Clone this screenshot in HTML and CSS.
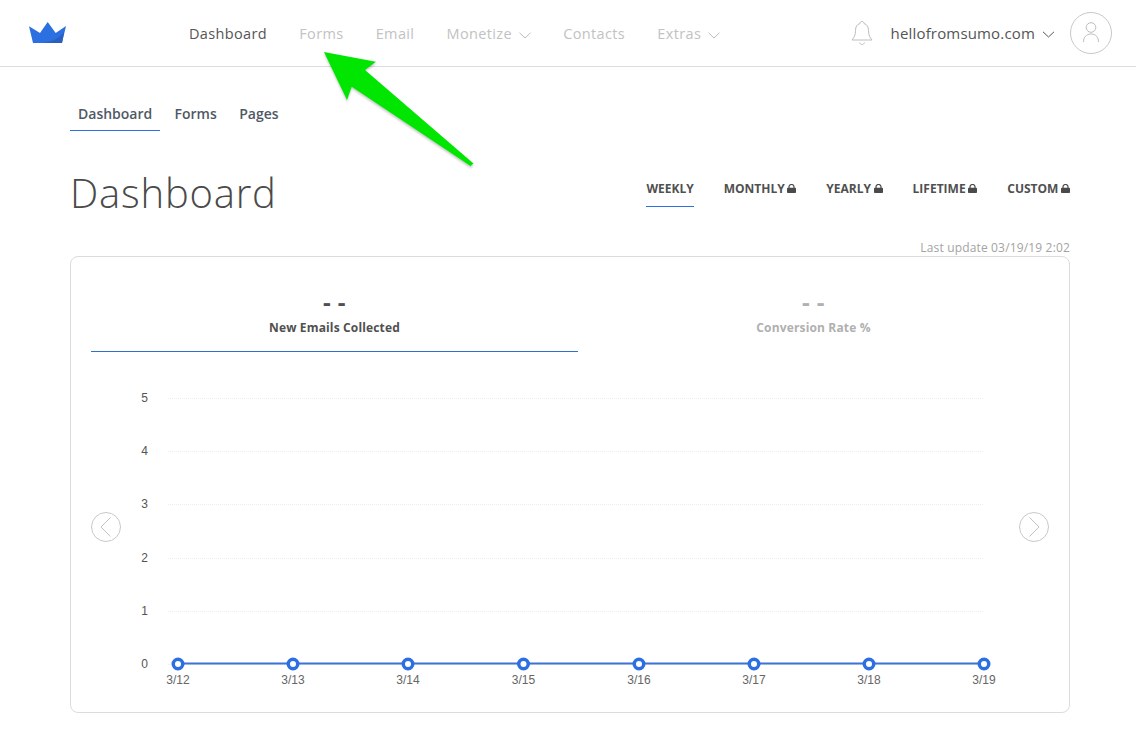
FILE: index.html
```html
<!DOCTYPE html>
<html lang="en">
<head>
<meta charset="utf-8">
<title>Dashboard</title>
<link rel="stylesheet" href="styles.css">
</head>
<body>
<header class="topbar">
  <a class="logo" href="#">
    <svg width="37" height="21" viewBox="0 0 37 21"><path d="M0 4.300 11 11 18.700 0 26.700 11 37 4 33 21H4Z" fill="#2b6fe0"/><path d="M33 21H14C22 20 30 17 35 10Z" fill="#2a5fbd"/></svg>
  </a>
  <nav class="mainnav">
    <a class="mainnav-item mainnav-item--active" href="#">Dashboard</a>
    <a class="mainnav-item" href="#">Forms</a>
    <a class="mainnav-item" href="#">Email</a>
    <a class="mainnav-item" href="#">Monetize <svg class="chev" width="12" height="7" viewBox="0 0 12 7"><path d="M.5.800 6 6l5.500-5.200" fill="none" stroke="#bbb"/></svg></a>
    <a class="mainnav-item" href="#">Contacts</a>
    <a class="mainnav-item" href="#">Extras <svg class="chev" width="12" height="7" viewBox="0 0 12 7"><path d="M.5.800 6 6l5.500-5.200" fill="none" stroke="#bbb"/></svg></a>
  </nav>
  <div class="account">
    <svg class="bell" width="22" height="26" viewBox="0 0 22 26"><path d="M11 1.500c-1.300 0-2 .8-2 2C5.800 4.500 4.500 7 4.500 10.500c0 5-1.500 7-3.500 9.500h20c-2-2.500-3.500-4.500-3.500-9.500 0-3.500-1.300-6-4.500-7 0-1.200-.7-2-2-2Z" fill="none" stroke="#bdbdbd"/><path d="M8.500 22.500c.5 1.300 1.300 2 2.500 2s2-.7 2.500-2" fill="none" stroke="#bdbdbd"/></svg>
    <span class="account-name">hellofromsumo.com</span>
    <svg class="chev-dark" width="13" height="7" viewBox="0 0 13 7"><path d="M1 .8 6.500 6 12 .8" fill="none" stroke="#555"/></svg>
    <span class="avatar">
      <svg width="42" height="42" viewBox="0 0 42 42"><circle cx="21" cy="21" r="20.500" fill="none" stroke="#c8c8c8"/><circle cx="21" cy="15.500" r="4.800" fill="none" stroke="#bdbdbd"/><path d="M13.500 30c0-5 3-8 7.500-8s7.500 3 7.500 8" fill="none" stroke="#bdbdbd"/></svg>
    </span>
  </div>
</header>

<main class="page">
  <nav class="subnav">
    <a class="subnav-item subnav-item--active" href="#">Dashboard</a>
    <a class="subnav-item" href="#">Forms</a>
    <a class="subnav-item" href="#">Pages</a>
  </nav>

  <div class="titlerow">
    <h1 class="title">Dashboard</h1>
    <div class="periods">
      <a class="period period--active" href="#">WEEKLY</a>
      <a class="period" href="#">MONTHLY <svg class="lock" width="9" height="9" viewBox="0 0 9 9"><path d="M2 4V2.800C2 1.400 3 .5 4.500 .5S7 1.400 7 2.800V4" fill="none" stroke="#4a4a4a" stroke-width="1.200"/><rect y="3.800" width="9" height="5.200" rx=".8" fill="#4a4a4a"/></svg></a>
      <a class="period" href="#">YEARLY <svg class="lock" width="9" height="9" viewBox="0 0 9 9"><path d="M2 4V2.800C2 1.400 3 .5 4.500 .5S7 1.400 7 2.800V4" fill="none" stroke="#4a4a4a" stroke-width="1.200"/><rect y="3.800" width="9" height="5.200" rx=".8" fill="#4a4a4a"/></svg></a>
      <a class="period" href="#">LIFETIME <svg class="lock" width="9" height="9" viewBox="0 0 9 9"><path d="M2 4V2.800C2 1.400 3 .5 4.500 .5S7 1.400 7 2.800V4" fill="none" stroke="#4a4a4a" stroke-width="1.200"/><rect y="3.800" width="9" height="5.200" rx=".8" fill="#4a4a4a"/></svg></a>
      <a class="period" href="#">CUSTOM <svg class="lock" width="9" height="9" viewBox="0 0 9 9"><path d="M2 4V2.800C2 1.400 3 .5 4.500 .5S7 1.400 7 2.800V4" fill="none" stroke="#4a4a4a" stroke-width="1.200"/><rect y="3.800" width="9" height="5.200" rx=".8" fill="#4a4a4a"/></svg></a>
    </div>
  </div>

  <p class="updated">Last update 03/19/19 2:02</p>

  <section class="card">
    <div class="metrics">
      <div class="metric metric--active">
        <div class="metric-value">- -</div>
        <div class="metric-label">New Emails Collected</div>
      </div>
      <div class="metric">
        <div class="metric-value">- -</div>
        <div class="metric-label">Conversion Rate %</div>
      </div>
    </div>
    <div class="chartrow">
      <button class="pager" type="button" aria-label="Previous">
        <svg width="30" height="30" viewBox="0 0 30 30"><circle cx="15" cy="15" r="14.500" fill="none" stroke="#c8c8c8"/><path d="M19.500 5.500 10 15l9.500 9.500" fill="none" stroke="#c4c4c4"/></svg>
      </button>
      <svg class="chart" width="898" height="346" viewBox="0 0 898 346">
        <g class="grid">
          <line x1="47" x2="863" y1="44.500" y2="44.500"/>
          <line x1="47" x2="863" y1="97.500" y2="97.500"/>
          <line x1="47" x2="863" y1="150.500" y2="150.500"/>
          <line x1="47" x2="863" y1="204.500" y2="204.500"/>
          <line x1="47" x2="863" y1="257.500" y2="257.500"/>
          <line x1="47" x2="863" y1="310.500" y2="310.500"/>
        </g>
        <g class="ylabels">
          <text x="27" y="48">5</text>
          <text x="27" y="101">4</text>
          <text x="27" y="154">3</text>
          <text x="27" y="208">2</text>
          <text x="27" y="261">1</text>
          <text x="27" y="314">0</text>
        </g>
        <line class="series" x1="57" x2="863" y1="309.500" y2="309.500"/>
        <g class="points">
          <circle cx="57" cy="310" r="4.750"/>
          <circle cx="172" cy="310" r="4.750"/>
          <circle cx="287" cy="310" r="4.750"/>
          <circle cx="402.500" cy="310" r="4.750"/>
          <circle cx="518" cy="310" r="4.750"/>
          <circle cx="633" cy="310" r="4.750"/>
          <circle cx="748" cy="310" r="4.750"/>
          <circle cx="863" cy="310" r="4.750"/>
        </g>
        <g class="xlabels">
          <text x="57" y="330">3/12</text>
          <text x="172" y="330">3/13</text>
          <text x="287" y="330">3/14</text>
          <text x="402.500" y="330">3/15</text>
          <text x="518" y="330">3/16</text>
          <text x="633" y="330">3/17</text>
          <text x="748" y="330">3/18</text>
          <text x="863" y="330">3/19</text>
        </g>
      </svg>
      <button class="pager" type="button" aria-label="Next">
        <svg width="30" height="30" viewBox="0 0 30 30"><circle cx="15" cy="15" r="14.500" fill="none" stroke="#c8c8c8"/><path d="M10.500 5.500 20 15l-9.500 9.500" fill="none" stroke="#c4c4c4"/></svg>
      </button>
    </div>
  </section>
</main>

<svg class="callout" width="160" height="125" viewBox="0 0 160 125">
  <path d="M4 2 56 11.700 45 20 153.500 113.500 150.500 116 31.700 36.700 27 50Z" fill="#00e600"/>
</svg>
</body>
</html>
```

FILE: styles.css
```css
* { box-sizing: border-box; }

html, body { margin: 0; padding: 0; }

body {
  background: #fff;
  color: #4a4a4a;
  font-family: "Open Sans", "Liberation Sans", sans-serif;
  position: relative;
  height: 753px;
  overflow: hidden;
}

a { color: inherit; text-decoration: none; }

.topbar {
  display: flex;
  align-items: center;
  height: 67px;
  padding: 0 24px 0 29px;
  border-bottom: 1px solid #dcdcdc;
}

.logo {
  display: flex;
  width: 160px;
  padding-bottom: 1px;
}

.mainnav {
  display: flex;
  align-items: center;
  gap: 32.250px;
  flex: 1;
}

.mainnav-item {
  font-size: 14.500px;
  letter-spacing: .35px;
  color: #c2c2c2;
  white-space: nowrap;
}

.mainnav-item--active { color: #555; }

.chev { margin-left: 3px; }

.account {
  display: flex;
  align-items: center;
}

.bell { margin-right: 18px; }

.account-name {
  font-size: 15px;
  letter-spacing: .165px;
  color: #555;
}

.chev-dark { margin: 2px 15px 0 7px; }

.avatar { display: flex; }

.page { padding: 0 66px 0 70px; }

.subnav {
  display: flex;
  gap: 6.500px;
  padding-top: 29px;
}

.subnav-item {
  padding: 7px 8px 6px;
  font-size: 14px;
  font-weight: 600;
  line-height: 21px;
  color: #4f5965;
  border-bottom: 1px solid transparent;
}

.subnav-item--active {
  border-bottom-color: #2b6fe0;
  width: 90px;
}

.titlerow {
  display: flex;
  justify-content: space-between;
  align-items: flex-start;
  margin-top: 32px;
}

.title {
  margin: 0;
  font-size: 40px;
  font-weight: 300;
  line-height: 60px;
  letter-spacing: .8px;
  color: #4a4a4a;
}

.periods {
  display: flex;
  gap: 30px;
  padding-top: 17px;
}

.period {
  display: block;
  height: 27px;
  font-size: 12px;
  font-weight: 700;
  line-height: 17px;
  color: #505050;
  white-space: nowrap;
}

.period--active { border-bottom: 1px solid #2b6fe0; }

.lock { margin-left: -.5px; }

.updated {
  margin: 17px 0 0;
  height: 15px;
  font-size: 12px;
  line-height: 15px;
  letter-spacing: .16px;
  text-align: right;
  color: #a3a3a3;
}

.card {
  margin-top: 1px;
  height: 457px;
  padding: 0 20px;
  border: 1px solid #dcdcdc;
  border-radius: 8px;
}

.metrics { display: flex; }

.metric {
  flex: 1;
  height: 95px;
  padding-top: 30px;
  text-align: center;
  color: #b0b0b0;
}

.metric--active {
  flex: 0 0 487px;
  color: #505050;
  border-bottom: 1px solid #2f6fd0;
}

.metric-value {
  font-size: 24px;
  font-weight: 700;
  line-height: 30px;
  height: 30px;
  letter-spacing: .5px;
}

.metric-label {
  margin-top: 2px;
  font-size: 12px;
  font-weight: 700;
  line-height: 18px;
  letter-spacing: .15px;
}

.chartrow {
  display: flex;
  align-items: center;
  justify-content: space-between;
  padding-top: 2px;
}

.pager {
  display: flex;
  flex: none;
  width: 30px;
  height: 30px;
  padding: 0;
  border: 0;
  background: none;
}

.chart { flex: none; display: block; }

.grid line {
  stroke: #ededed;
  stroke-width: 1;
  stroke-dasharray: 1 1;
}

.ylabels text {
  font-family: "Liberation Sans", Arial, sans-serif;
  font-size: 12px;
  fill: #555;
  text-anchor: end;
}

.xlabels text {
  font-family: "Liberation Sans", Arial, sans-serif;
  font-size: 12px;
  fill: #666;
  text-anchor: middle;
}

.series { stroke: #3b73d6; stroke-width: 2; }

.points circle {
  fill: #fff;
  stroke: #2b6fe0;
  stroke-width: 3.500;
}

.callout {
  position: absolute;
  left: 320px;
  top: 50px;
  filter: drop-shadow(0 2px 1px rgba(0, 0, 0, .22));
}
```
